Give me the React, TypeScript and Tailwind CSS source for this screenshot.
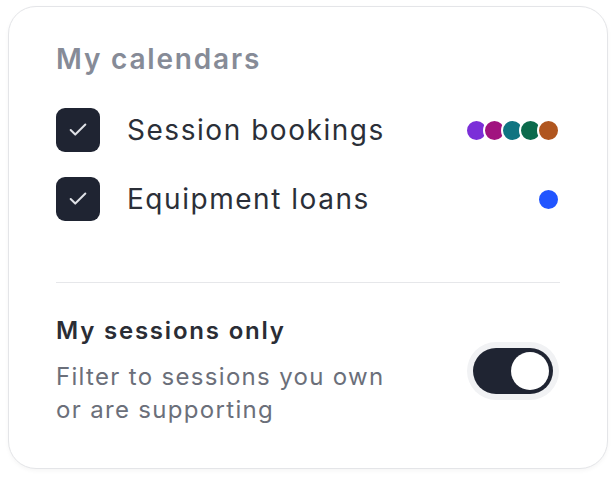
import { useState } from "react";
import { Check } from "lucide-react";

const bookingColors = ["#7b2fd8", "#a1137f", "#0f7481", "#0b6a4c", "#b0561f"];

function CalendarRow({
  label,
  colors,
  checked,
  onToggle,
}: {
  label: string;
  colors: string[];
  checked: boolean;
  onToggle: () => void;
}) {
  return (
    <div className="flex items-center justify-between h-[44px]">
      <button onClick={onToggle} className="flex items-center gap-[27px]">
        <span
          className={`w-[44px] h-[44px] rounded-[9px] flex items-center justify-center ${
            checked ? "bg-[#1f2432]" : "border-2 border-[#c9ccd3] bg-white"
          }`}
        >
          {checked && <Check size={22} strokeWidth={2.2} className="text-[#dfe1e6]" />}
        </span>
        <span className="text-[28px] leading-[34px] tracking-[0.055em] text-[#2b2f38]">{label}</span>
      </button>
      <div className="flex items-center">
        {colors.map((c, i) => (
          <span
            key={c}
            className={`w-[23px] h-[23px] rounded-full border-2 border-white ${i > 0 ? "-ml-[5px]" : ""}`}
            style={{ backgroundColor: c }}
          />
        ))}
      </div>
    </div>
  );
}

export default function App() {
  const [sessions, setSessions] = useState(true);
  const [loans, setLoans] = useState(true);
  const [mineOnly, setMineOnly] = useState(true);

  return (
    <div className="w-[616px] h-[480px] bg-white pt-[6px] px-[8px] font-['Inter',sans-serif]">
      <div className="w-[600px] h-[463px] rounded-[28px] border border-[#e4e5e8] bg-white shadow-[0_2px_4px_rgba(0,0,0,0.04)] px-[47px] pt-[35px]">
        <h2 className="text-[28px] leading-[34px] font-semibold tracking-[0.065em] text-[#868b97]">My calendars</h2>

        <div className="mt-[32px] flex flex-col gap-[25px]">
          <CalendarRow
            label="Session bookings"
            colors={bookingColors}
            checked={sessions}
            onToggle={() => setSessions(!sessions)}
          />
          <CalendarRow
            label="Equipment loans"
            colors={["#2155ff"]}
            checked={loans}
            onToggle={() => setLoans(!loans)}
          />
        </div>

        <div className="mt-[61px] h-px bg-[#e6e7ea]" />

        <div className="mt-[33px] flex items-center justify-between">
          <div className="max-w-[345px]">
            <p className="text-[24px] leading-[30px] font-semibold tracking-[0.075em] text-[#2a2d35]">My sessions only</p>
            <p className="mt-[14px] text-[24px] leading-[33px] tracking-[0.055em] text-[#6b6f7a]">
              Filter to sessions you own or are supporting
            </p>
          </div>
          <button
            onClick={() => setMineOnly(!mineOnly)}
            className={`mr-[7px] w-[80px] h-[46px] rounded-full p-[4px] flex items-center ring-[6px] ring-[#f1f2f4] ${
              mineOnly ? "bg-[#1f2432] justify-end" : "bg-[#d4d6db] justify-start"
            }`}
          >
            <span className="w-[38px] h-[38px] rounded-full bg-white" />
          </button>
        </div>
      </div>
    </div>
  );
}
